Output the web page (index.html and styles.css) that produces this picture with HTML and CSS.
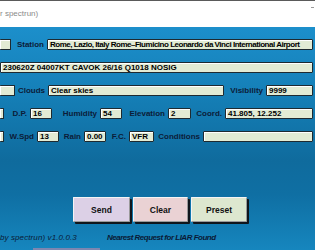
FILE: index.html
```html
<!DOCTYPE html>
<html>
<head>
<meta charset="utf-8">
<link rel="stylesheet" href="styles.css">
</head>
<body>
<div class="window">
  <div class="titlebar">
    <span class="title">r spectrun)</span>
    <span class="winctl"></span>
  </div>
  <div class="main">
    <div class="form">
      <div class="row">
        <span class="field stub w11"></span>
        <span class="label w36">Station</span>
        <span class="field grow station">Rome, Lazio, Italy Rome–Fiumicino Leonardo da Vinci International Airport</span>
      </div>
      <div class="row">
        <span class="field grow metar">230620Z 04007KT CAVOK 26/16 Q1018 NOSIG</span>
      </div>
      <div class="row">
        <span class="field stub w15"></span>
        <span class="label w33">Clouds</span>
        <span class="field w176">Clear skies</span>
        <span class="label w42">Visibility</span>
        <span class="field grow">9999</span>
      </div>
      <div class="row">
        <span class="field stub w4"></span>
        <span class="label w26">D.P.</span>
        <span class="field w22">16</span>
        <span class="label w48">Humidity</span>
        <span class="field w22">54</span>
        <span class="label w46">Elevation</span>
        <span class="field w23">2</span>
        <span class="label w34">Coord.</span>
        <span class="field grow">41.805, 12.252</span>
      </div>
      <div class="row">
        <span class="field stub w4"></span>
        <span class="label w33">W.Spd</span>
        <span class="field w22">13</span>
        <span class="label w25">Rain</span>
        <span class="field w22">0.00</span>
        <span class="label w23">F.C.</span>
        <span class="field w25">VFR</span>
        <span class="label w49">Conditions</span>
        <span class="field grow"></span>
      </div>
    </div>
    <div class="buttons">
      <button class="btn send">Send</button>
      <button class="btn clear">Clear</button>
      <button class="btn preset">Preset</button>
    </div>
    <div class="footer">
      <span class="version">by spectrun) v1.0.0.3</span>
      <span class="status">Nearest Request for LIAR Found</span>
    </div>
    <div class="tabline"></div>
  </div>
</div>
</body>
</html>
```

FILE: styles.css
```css
html, body {
  margin: 0;
  padding: 0;
  width: 315px;
  height: 250px;
  overflow: hidden;
  background: #ffffff;
  font-family: "Liberation Sans", Arial, sans-serif;
}

.window {
  display: flex;
  flex-direction: column;
  width: 315px;
  height: 250px;
}

.titlebar {
  height: 27px;
  border-top: 1px solid #5a5a5a;
  background: #ffffff;
  display: flex;
  align-items: center;
  justify-content: space-between;
  box-sizing: border-box;
}

.title {
  font-size: 8px;
  color: #8a8a8a;
  font-family: "Liberation Sans", Arial, sans-serif;
  margin-top: -1px;
}

.winctl {
  width: 3px;
  height: 1px;
  background: #9a9a9a;
  margin-right: 1px;
  align-self: flex-start;
  margin-top: 6px;
}

.main {
  flex: 1;
  display: flex;
  flex-direction: column;
  background: linear-gradient(180deg, #1c8fcb 0%, #157fb7 30%, #0f6b9d 60%, #0f6fa3 75%, #1686be 100%);
}

.form {
  display: flex;
  flex-direction: column;
  gap: 12px;
  padding-top: 12px;
  padding-right: 2px;
}

.row {
  display: flex;
  align-items: center;
  height: 11px;
}

.field {
  box-sizing: border-box;
  height: 11px;
  background: #e2ebd4;
  border: 1px solid #1e2a30;
  box-shadow: inset 1px 1px 0 #ffffff;
  font-size: 8px;
  font-weight: bold;
  line-height: 9px;
  color: #000000;
  padding-left: 2px;
  white-space: nowrap;
  overflow: hidden;
  border-radius: 1px;
}

.station {
  letter-spacing: -0.48px;
}

.stub {
  border-left: none;
  padding: 0;
}

.grow { flex: 1; }

.label {
  box-sizing: border-box;
  display: flex;
  justify-content: flex-end;
  padding-right: 3px;
  font-size: 8px;
  font-weight: bold;
  color: #0c1c38;
  white-space: nowrap;
}

.w4 { width: 4px; }
.w11 { width: 11px; }
.w15 { width: 15px; }
.w22 { width: 22px; }
.w23 { width: 23px; }
.w25 { width: 25px; }
.w26 { width: 26px; }
.w33 { width: 33px; }
.w34 { width: 34px; }
.w36 { width: 36px; }
.w42 { width: 42px; }
.w46 { width: 46px; }
.w48 { width: 48px; }
.w49 { width: 49px; }
.w176 { width: 176px; }

.buttons {
  display: flex;
  gap: 3px;
  padding-left: 73px;
  margin-top: 55px;
}

.btn {
  box-sizing: border-box;
  width: 56px;
  height: 25px;
  border: 1px solid #f4f4f4;
  border-right-color: #9a9a9a;
  border-bottom-color: #9a9a9a;
  box-shadow: 2px 2px 0 #10161c;
  font-family: "Liberation Sans", Arial, sans-serif;
  font-size: 8.5px;
  font-weight: bold;
  color: #111111;
  padding: 0;
  border-radius: 1px;
}

.send { background: #dcd0e6; width: 57px; }
.clear { background: #ead2d4; width: 55px; }
.preset { background: #dde7cf; }

.footer {
  display: flex;
  align-items: center;
  margin-top: 9px;
  height: 12px;
  font-size: 8px;
  font-style: italic;
  color: #0a1a36;
}

.version {
  width: 107px;
  letter-spacing: 0.1px;
}

.status {
  font-weight: bold;
  letter-spacing: -0.5px;
}

.tabline {
  margin-top: auto;
  margin-left: 33px;
  width: 67px;
  height: 2px;
  background: #7d86b0;
}
```
